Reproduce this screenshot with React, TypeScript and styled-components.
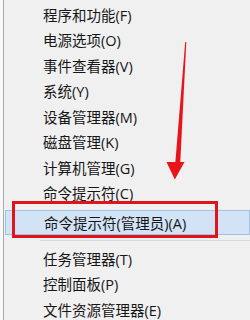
import React from "react";
import styled, { createGlobalStyle } from "styled-components";

const GlobalStyle = createGlobalStyle`
  html, body {
    margin: 0;
    padding: 0;
    background: #f8f8f8;
  }
`;

const Page = styled.div`
  position: relative;
  width: 250px;
  height: 320px;
  overflow: hidden;
  background: #f8f8f8;
`;

const Menu = styled.ul`
  list-style: none;
  margin: 0 0 0 3px;
  padding: 1.5px 0 0 0;
  height: 320px;
  box-sizing: border-box;
  background: #f0f0f0;
  border-left: 1px solid #a9a9a9;
  font-family: "Open Sans", "Noto Sans CJK SC", sans-serif;
  font-size: 14.5px;
  color: #161616;
`;

const Item = styled.li<{ $active?: boolean }>`
  display: flex;
  align-items: center;
  box-sizing: border-box;
  height: ${(p) => (p.$active ? "25px" : "25.5px")};
  margin-top: ${(p) => (p.$active ? "4px" : "0")};
  margin-left: ${(p) => (p.$active ? "1px" : "0")};
  padding-left: ${(p) => (p.$active ? "38px" : "39px")};
  background: ${(p) => (p.$active ? "#d2e3f6" : "transparent")};
  border: ${(p) => (p.$active ? "1px solid #9ec2e9" : "none")};
  white-space: nowrap;
`;

const Separator = styled.li`
  height: 1px;
  margin: 5px 0 5px 36px;
  background: #d9d9d9;
`;

const Highlight = styled.div`
  position: absolute;
  left: 12px;
  top: 201px;
  width: 206px;
  height: 37px;
  box-sizing: border-box;
  border: 3px solid #e1141b;
`;

const ArrowSvg = styled.svg`
  position: absolute;
  left: 0;
  top: 0;
  pointer-events: none;
`;

const topItems = [
  "程序和功能(F)",
  "电源选项(O)",
  "事件查看器(V)",
  "系统(Y)",
  "设备管理器(M)",
  "磁盘管理(K)",
  "计算机管理(G)",
  "命令提示符(C)",
];

const bottomItems = ["任务管理器(T)", "控制面板(P)", "文件资源管理器(E)"];

const App: React.FC = () => {
  return (
    <Page>
      <GlobalStyle />
      <Menu>
        {topItems.map((label) => (
          <Item key={label}>{label}</Item>
        ))}
        <Item $active>命令提示符(管理员)(A)</Item>
        <Separator />
        {bottomItems.map((label) => (
          <Item key={label}>{label}</Item>
        ))}
      </Menu>
      <Highlight />
      <ArrowSvg width="250" height="320" viewBox="0 0 250 320">
        <polygon
          points="185.2,42 186.3,42 180.2,164 175.2,164"
          fill="#e8141b"
        />
        <polygon points="166.5,162 184.5,162 174.8,179.5" fill="#e8141b" />
      </ArrowSvg>
    </Page>
  );
};

export default App;
